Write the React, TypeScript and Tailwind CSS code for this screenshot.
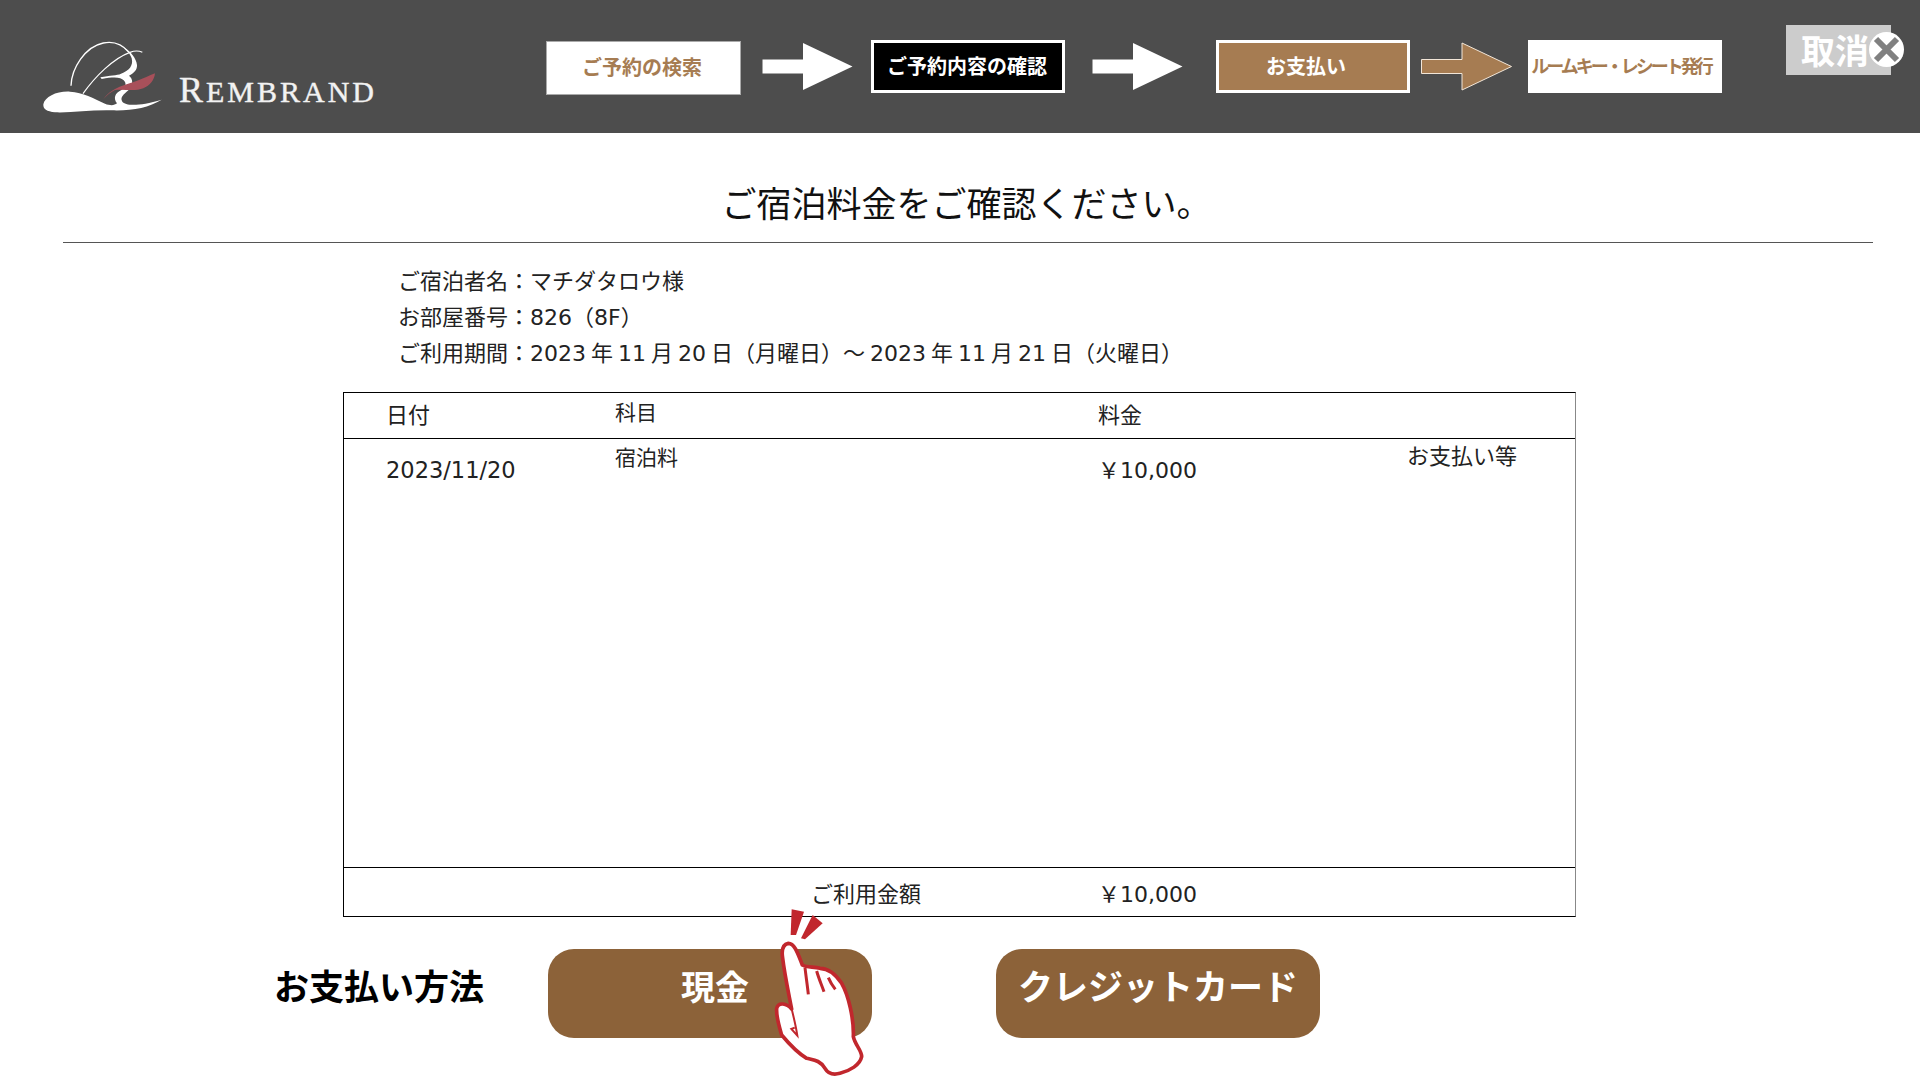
const BROWN = "#a67c52"

function Logo() {
    return (
        <svg width="135" height="85" viewBox="0 0 405 255" className="shrink-0">
            {/* body */}
            <path
                d="M25 208 C30 185 65 168 105 170 C145 172 175 190 210 206 C225 212 238 212 246 205 C234 190 240 175 258 166 C272 158 276 146 266 136 C258 127 240 124 200 132 L196 127 C225 120 246 122 258 116 C282 108 296 92 290 70 C287 60 280 50 268 38 C288 50 304 70 306 90 C307 105 296 115 282 122 C296 132 294 152 280 166 C266 178 254 188 262 200 C272 212 310 215 380 194 C340 218 290 228 230 226 C170 224 110 234 60 232 C35 230 24 222 25 208 Z"
                fill="#fff"
            />
            {/* pen strokes */}
            <path d="M108 152 C110 100 150 35 205 24 C235 18 262 28 282 52" fill="none" stroke="#fff" strokeWidth="4" />
            <path d="M144 176 C180 125 235 70 285 52 C298 47 310 46 322 52" fill="none" stroke="#fff" strokeWidth="3.5" />
            {/* quill */}
            <path
                d="M205 192 C222 170 240 160 262 152 C290 145 325 130 360 115 C358 135 345 152 325 160 C300 170 270 162 240 165 C228 170 215 182 205 192 Z"
                fill="#a8505a"
            />
        </svg>
    )
}

function Arrow({ fill, stroke }: { fill: string; stroke?: string }) {
    return (
        <svg width="91" height="49" viewBox="0 0 91 49" className="shrink-0">
            <path d="M0.5 17.5 H41 V1 L90.5 24.5 L41 48 V31.5 H0.5 Z" fill={fill} stroke={stroke} />
        </svg>
    )
}

function Hand() {
    return (
        <svg width="100" height="175" viewBox="0 0 300 525" className="absolute left-[770px] top-[905px]">
            <path d="M65 13 L102 20 L78 90 L62 90 Z" fill="#c1272d" />
            <path d="M128 30 L158 55 L105 103 L93 100 Z" fill="#c1272d" />
            <path
                d="M55 115 C38 118 34 135 38 160 C44 210 55 260 65 312 C50 295 25 290 20 310 C18 335 28 365 35 390 C60 420 85 445 110 460 C130 465 150 465 165 490 C175 508 190 510 210 505 C240 497 270 480 275 455 C275 435 255 420 250 395 C252 340 235 270 215 235 C195 205 170 190 150 190 C130 185 110 188 97 180 C85 150 75 115 55 115 Z"
                fill="#fff"
                stroke="#c1272d"
                strokeWidth="11"
                strokeLinejoin="round"
            />
            <path d="M105 188 C108 215 112 240 115 268" fill="none" stroke="#c1272d" strokeWidth="9" />
            <path d="M140 198 C146 220 155 240 162 260" fill="none" stroke="#c1272d" strokeWidth="9" />
            <path d="M175 218 C180 230 188 243 196 253" fill="none" stroke="#c1272d" strokeWidth="9" />
            <path d="M65 312 C72 340 78 365 82 392 L64 372 L74 368" fill="none" stroke="#c1272d" strokeWidth="6" />
        </svg>
    )
}

export default function App() {
    return (
        <div className="relative w-[1920px] h-[1080px] overflow-hidden bg-white text-[22px] text-[#111] font-['DejaVu_Sans','Noto_Sans_CJK_JP',sans-serif]">
            {/* Top bar */}
            <header className="flex h-[133px] items-center bg-[#4d4d4d]">
                <div className="flex w-[546px] shrink-0 items-center self-start pl-[35px] pt-[35px]">
                    <Logo />
                    <span className="ml-[9px] mt-[24px] whitespace-nowrap font-['Liberation_Serif',serif] text-[30px] leading-none tracking-[3px] text-[#f2f2f2] [-webkit-text-stroke:0.4px_#f2f2f2]">
                        <span className="text-[36px]">R</span>EMBRAND
                    </span>
                </div>

                <div className="mt-[3px] flex h-[54px] w-[195px] shrink-0 items-center justify-center border border-[#aaa] bg-white pr-[3px] text-[20px] font-bold text-[#a67c52]">
                    ご予約の検索
                </div>
                <div className="ml-[21px] mr-[18px]">
                    <Arrow fill="#fff" />
                </div>
                <div className="flex h-[53px] w-[194px] shrink-0 items-center justify-center border-[3px] border-white bg-black pr-[2px] text-[20px] font-bold text-white">
                    ご予約内容の確認
                </div>
                <div className="ml-[27px] mr-[33px]">
                    <Arrow fill="#fff" />
                </div>
                <div className="flex h-[53px] w-[194px] shrink-0 items-center justify-center border-[3px] border-white bg-[#a67c52] pr-[14px] text-[20px] font-bold text-white">
                    お支払い
                </div>
                <div className="ml-[11px] mr-[16px]">
                    <Arrow fill={BROWN} stroke="#f2e6d8" />
                </div>
                <div className="flex h-[53px] w-[194px] shrink-0 items-center justify-center bg-white pr-[8px] text-[18px] font-bold tracking-[-3px] text-[#a67c52]">
                    ルームキー・レシート発行
                </div>

                <div className="relative ml-[64px] mt-[25px] flex h-[50px] w-[105px] shrink-0 items-center self-start bg-[#ccc] pl-[15px] pt-[3px] text-[34px] font-bold leading-none text-white">
                    取消
                    <div className="absolute left-[83px] top-[7px] flex h-[35px] w-[35px] items-center justify-center rounded-full bg-white">
                        <svg width="27" height="27" viewBox="0 0 27 27">
                            <path d="M3 3 L24 24 M24 3 L3 24" stroke="#808080" strokeWidth="6" />
                        </svg>
                    </div>
                </div>
            </header>

            {/* Title */}
            <h1 className="ml-[63px] mr-[47px] flex h-[110px] items-end justify-center border-b border-[#555] pb-[12px] pr-[3px] text-[35px] font-normal leading-[50px] text-[#111]">
                ご宿泊料金をご確認ください。
            </h1>

            {/* Guest info */}
            <div className="pl-[398px] pt-[21px] leading-[36px] text-[#222] [word-spacing:-2px]">
                <div>ご宿泊者名：マチダタロウ様</div>
                <div>お部屋番号：826（8F）</div>
                <div>ご利用期間：2023 年 11 月 20 日（月曜日）～ 2023 年 11 月 21 日（火曜日）</div>
            </div>

            {/* Statement table */}
            <div className="ml-[343px] mt-[20px] flex h-[525px] w-[1233px] flex-col border border-black border-r-[#888]">
                <div className="grid h-[46px] shrink-0 grid-cols-[229px_483px_309px_1fr] items-center border-b border-black px-[42px] text-[#222]">
                    <span>日付</span>
                    <span className="mb-[4px] text-[21px]">科目</span>
                    <span>料金</span>
                </div>
                <div className="grid flex-1 grid-cols-[229px_483px_309px_1fr] items-start px-[42px] text-[#222]">
                    <span className="pt-[15px] text-[22.5px]">2023/11/20</span>
                    <span className="pt-[4px] text-[21px]">宿泊料</span>
                    <span className="pt-[15px]">{"\uFFE5"}10,000</span>
                    <span className="pt-[1px]">お支払い等</span>
                </div>
                <div className="flex h-[49px] shrink-0 items-center border-t border-black pl-[467px] pt-[5px] text-[#222]">
                    <span className="w-[287px]">ご利用金額</span>
                    <span>{"\uFFE5"}10,000</span>
                </div>
            </div>

            {/* Payment method */}
            <div className="mt-[32px] flex items-start">
                <span className="ml-[274px] w-[274px] pt-[13px] text-[35px] font-bold leading-[52px] text-black">
                    お支払い方法
                </span>
                <button className="flex h-[89px] w-[324px] items-start justify-center rounded-[26px] bg-[#8c6239] pl-[10px] pt-[13px] text-[34px] font-bold leading-[52px] text-white">
                    現金
                </button>
                <button className="ml-[124px] flex h-[89px] w-[324px] items-start justify-center rounded-[26px] bg-[#8c6239] pt-[13px] text-[35px] font-bold leading-[52px] text-white">
                    クレジットカード
                </button>
            </div>

            <Hand />
        </div>
    )
}
